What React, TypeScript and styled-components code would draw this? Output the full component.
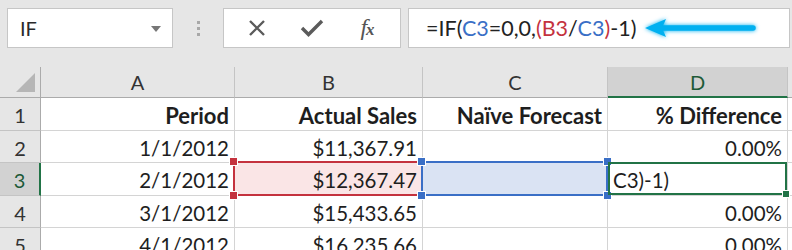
import styled, { createGlobalStyle } from "styled-components";

const GlobalStyle = createGlobalStyle`
  html, body {
    margin: 0;
    padding: 0;
    background: #e6e6e6;
  }
`;

const FONT = `"Lato", "Open Sans", "Liberation Sans", sans-serif`;

const Window = styled.div`
  width: 792px;
  height: 250px;
  overflow: hidden;
  background: #e6e6e6;
  font-family: ${FONT};
  color: #1e1e1e;
`;

// верхняя панель: поле имени и строка формул
const Toolbar = styled.div`
  height: 67px;
  box-sizing: border-box;
  padding: 8px 2px 0 7px;
  display: flex;
  align-items: flex-start;
`;

const Box = styled.div`
  height: 40px;
  box-sizing: border-box;
  background: #fff;
  border: 1px solid #c6c6c6;
  display: flex;
  align-items: center;
`;

const NameBox = styled(Box)`
  width: 166px;
  padding: 0 11px 0 12px;
  justify-content: space-between;
  font-size: 20px;
  color: #2a2a2a;
`;

const DropArrow = styled.span`
  width: 0;
  height: 0;
  border-left: 5px solid transparent;
  border-right: 5px solid transparent;
  border-top: 6px solid #777;
  margin-top: 2px;
`;

const Grip = styled.div`
  width: 50px;
  height: 40px;
  display: flex;
  flex-direction: column;
  align-items: center;
  justify-content: center;
  gap: 3px;
`;

const GripDot = styled.span`
  width: 3px;
  height: 3px;
  background: #a8a8a8;
`;

const ButtonsBox = styled(Box)`
  width: 178px;
  padding: 0 0 0 19px;
`;

const ToolButton = styled.span<{ $w: number }>`
  width: ${(p) => p.$w}px;
  display: flex;
  align-items: center;
  justify-content: center;
`;

const Fx = styled.span`
  font-family: "Liberation Serif", serif;
  font-style: italic;
  font-size: 24px;
  color: #555;
  letter-spacing: -1px;
  margin-top: -2px;
  & > small {
    font-size: 17px;
    font-weight: 700;
  }
`;

const FormulaBox = styled(Box)`
  flex: 1;
  margin-left: 7px;
  padding-left: 17px;
  font-size: 21.5px;
  color: #222;
  gap: 5px;
`;

const Ref = styled.span<{ $c: string }>`
  color: ${(p) => p.$c};
`;

// сетка листа
const Sheet = styled.div`
  display: grid;
  grid-template-columns: 41px 194px 188px 185px 180px 1fr;
  grid-template-rows: 31px 33px 32px 33px 32px 32px;
  background: #fff;
  font-size: 20px;
`;

const HeadCell = styled.div<{ $sel?: boolean }>`
  box-sizing: border-box;
  background: ${(p) => (p.$sel ? "#d2d2d2" : "#e6e6e6")};
  border-right: 1px solid #c4c4c4;
  border-bottom: ${(p) => (p.$sel ? "2px solid #217346" : "1px solid #ababab")};
  display: flex;
  align-items: center;
  justify-content: center;
  color: ${(p) => (p.$sel ? "#1d5a38" : "#333")};
  padding-top: ${(p) => (p.$sel ? 1 : 0)}px;
`;

const Corner = styled(HeadCell)`
  position: relative;
  border-right-color: #ababab;
  &::after {
    content: "";
    position: absolute;
    right: 5px;
    bottom: 5px;
    width: 0;
    height: 0;
    border-left: 19px solid transparent;
    border-bottom: 19px solid #b6b6b6;
  }
`;

const RowHead = styled.div<{ $sel?: boolean }>`
  box-sizing: border-box;
  background: ${(p) => (p.$sel ? "#d2d2d2" : "#e6e6e6")};
  border-right: ${(p) => (p.$sel ? "2px solid #217346" : "1px solid #ababab")};
  border-bottom: 1px solid #c4c4c4;
  display: flex;
  align-items: center;
  justify-content: center;
  color: ${(p) => (p.$sel ? "#1d5a38" : "#333")};
  padding-top: 2px;
`;

const Cell = styled.div<{ $bold?: boolean; $left?: boolean; $fill?: string }>`
  position: relative;
  box-sizing: border-box;
  border-right: 1px solid #d4d4d4;
  border-bottom: 1px solid #d4d4d4;
  background: ${(p) => p.$fill ?? "#fff"};
  display: flex;
  align-items: center;
  justify-content: ${(p) => (p.$left ? "flex-start" : "flex-end")};
  padding: 2px 5px 0 5px;
  font-weight: ${(p) => (p.$bold ? 700 : 400)};
  font-size: ${(p) => (p.$bold ? 22 : 20.5)}px;
  white-space: nowrap;
`;

// рамки выделения поверх ячеек
const Frame = styled.div<{ $c: string }>`
  position: absolute;
  top: -2px;
  left: -2px;
  right: -1px;
  bottom: -1px;
  border: 2px solid ${(p) => p.$c};
  pointer-events: none;
  z-index: 1;
`;

const Handle = styled.span<{ $c: string; $x: "l" | "r"; $y: "t" | "b" }>`
  position: absolute;
  width: 7px;
  height: 7px;
  background: ${(p) => p.$c};
  outline: 1px solid #fff;
  ${(p) => (p.$x === "l" ? "left: -5px;" : "right: -5px;")}
  ${(p) => (p.$y === "t" ? "top: -5px;" : "bottom: -5px;")}
`;

const ActiveFrame = styled.div`
  position: absolute;
  top: -1px;
  left: 0;
  right: 0;
  bottom: 0;
  border: 2px solid #217346;
  z-index: 2;
  &::after {
    content: "";
    position: absolute;
    right: -4px;
    bottom: -4px;
    width: 6px;
    height: 6px;
    background: #217346;
    outline: 1px solid #fff;
  }
`;

const XIcon = () => (
  <svg width="20" height="20" viewBox="0 0 20 20">
    <path d="M3 3 L17 17 M17 3 L3 17" stroke="#5b5b5b" strokeWidth="2.4" fill="none" />
  </svg>
);

const CheckIcon = () => (
  <svg width="24" height="20" viewBox="0 0 24 20">
    <path d="M2 10 L8.5 16.5 L22 3" stroke="#5b5b5b" strokeWidth="3.4" fill="none" />
  </svg>
);

const Arrow = () => (
  <svg width="120" height="28" viewBox="0 0 120 28">
    <defs>
      <filter id="glow" x="-20%" y="-60%" width="140%" height="220%">
        <feGaussianBlur stdDeviation="2.2" result="b" />
        <feMerge>
          <feMergeNode in="b" />
          <feMergeNode in="SourceGraphic" />
        </feMerge>
      </filter>
    </defs>
    <g filter="url(#glow)">
      <path d="M20 14 L112 14" stroke="#00b0f0" strokeWidth="5.5" strokeLinecap="round" />
      <path d="M4 14 L25 5 L21 14 L25 23 Z" fill="#00b0f0" />
    </g>
  </svg>
);

const cols = ["A", "B", "C", "D"];

const rows = [
  ["1/1/2012", "$11,367.91", "", "0.00%"],
  ["2/1/2012", "$12,367.47", "", ""],
  ["3/1/2012", "$15,433.65", "", "0.00%"],
  ["4/1/2012", "$16,235.66", "", "0.00%"],
];

export default function App() {
  return (
    <Window>
      <GlobalStyle />
      <Toolbar>
        <NameBox>
          IF
          <DropArrow />
        </NameBox>
        <Grip>
          <GripDot />
          <GripDot />
          <GripDot />
        </Grip>
        <ButtonsBox>
          <ToolButton $w={28}>
            <XIcon />
          </ToolButton>
          <ToolButton $w={82}>
            <CheckIcon />
          </ToolButton>
          <ToolButton $w={28}>
            <Fx>
              f<small>x</small>
            </Fx>
          </ToolButton>
        </ButtonsBox>
        <FormulaBox>
          <span>
            =IF(<Ref $c="#3a6fc6">C3</Ref>=0,0,<Ref $c="#c4323e">(B3</Ref>/
            <Ref $c="#3a6fc6">C3</Ref>
            <Ref $c="#c4323e">)</Ref>-1)
          </span>
          <Arrow />
        </FormulaBox>
      </Toolbar>
      <Sheet>
        <Corner />
        {cols.map((c) => (
          <HeadCell key={c} $sel={c === "D"}>
            {c}
          </HeadCell>
        ))}
        <HeadCell />

        <RowHead>1</RowHead>
        <Cell $bold>Period</Cell>
        <Cell $bold>Actual Sales</Cell>
        <Cell $bold>Naïve Forecast</Cell>
        <Cell $bold>% Difference</Cell>
        <Cell />

        {rows.map((r, i) => {
          const n = i + 2;
          const active = n === 3;
          return [
            <RowHead key={`h${n}`} $sel={active}>
              {n}
            </RowHead>,
            <Cell key={`a${n}`}>{r[0]}</Cell>,
            <Cell key={`b${n}`} $fill={active ? "#fae5e6" : undefined}>
              {r[1]}
              {active && (
                <Frame $c="#c4323e">
                  <Handle $c="#c4323e" $x="l" $y="t" />
                  <Handle $c="#c4323e" $x="l" $y="b" />
                </Frame>
              )}
            </Cell>,
            <Cell key={`c${n}`} $fill={active ? "#dae3f3" : undefined}>
              {r[2]}
              {active && (
                <Frame $c="#3a6fc6">
                  <Handle $c="#3a6fc6" $x="l" $y="t" />
                  <Handle $c="#3a6fc6" $x="l" $y="b" />
                  <Handle $c="#3a6fc6" $x="r" $y="t" />
                  <Handle $c="#3a6fc6" $x="r" $y="b" />
                </Frame>
              )}
            </Cell>,
            <Cell key={`d${n}`} $left={active}>
              {active ? "C3)-1)" : r[3]}
              {active && <ActiveFrame />}
            </Cell>,
            <Cell key={`e${n}`} />,
          ];
        })}
      </Sheet>
    </Window>
  );
}
